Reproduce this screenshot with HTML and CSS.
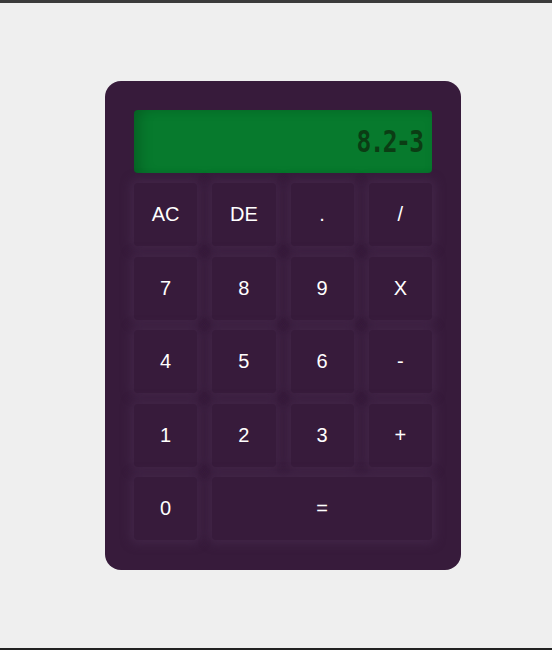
FILE: index.html
```html
<!DOCTYPE html>
<html>
<head>
<meta charset="utf-8">
<link rel="stylesheet" href="styles.css">
</head>
<body>
<div class="calc">
  <div class="display"><span class="readout">8.2-3</span></div>
  <div class="keys">
    <button class="key">AC</button>
    <button class="key">DE</button>
    <button class="key">.</button>
    <button class="key">/</button>
    <button class="key">7</button>
    <button class="key">8</button>
    <button class="key">9</button>
    <button class="key">X</button>
    <button class="key">4</button>
    <button class="key">5</button>
    <button class="key">6</button>
    <button class="key">-</button>
    <button class="key">1</button>
    <button class="key">2</button>
    <button class="key">3</button>
    <button class="key">+</button>
    <button class="key">0</button>
    <button class="key wide">=</button>
  </div>
</div>
</body>
</html>
```
FILE: styles.css
```css
html, body { margin: 0; padding: 0; }
body {
  box-sizing: border-box;
  height: 650px;
  background: #efefef;
  border-top: 3px solid #3b3b3b;
  border-bottom: 2px solid #222;
  padding: 78px 0 0 105px;
  font-family: "Liberation Sans", Arial, sans-serif;
}
.calc {
  width: 356px;
  box-sizing: border-box;
  padding: 29px 29px 30px 29px;
  background: #371b3b;
  border-radius: 16px;
}
.display {
  height: 63px;
  box-sizing: border-box;
  background: #077a2d;
  border-radius: 4px;
  margin-bottom: 10px;
  box-shadow: inset 12px 0 14px -6px rgba(0,0,0,0.18), inset 0 4px 10px rgba(0,0,0,0.06);
  text-align: right;
  padding-right: 10px;
  line-height: 64px;
}
.readout {
  display: inline-block;
  font-family: "DejaVu Sans Mono", monospace;
  font-size: 30px;
  font-weight: bold;
  letter-spacing: -2px;
  color: #0b3d14;
  transform: scaleX(0.82);
  transform-origin: right center;
}
.keys {
  display: grid;
  grid-template-columns: repeat(4, 1fr);
  grid-auto-rows: 63px;
  column-gap: 15px;
  row-gap: 10.5px;
}
.key {
  border: none;
  background: #371b3b;
  color: #fff;
  font-family: "Liberation Sans", Arial, sans-serif;
  font-size: 20px;
  border-radius: 4px;
  box-shadow: 0 0 10px 4px rgba(72,44,78,0.6);
  padding: 0;
}
.wide { grid-column: span 3; }
```
